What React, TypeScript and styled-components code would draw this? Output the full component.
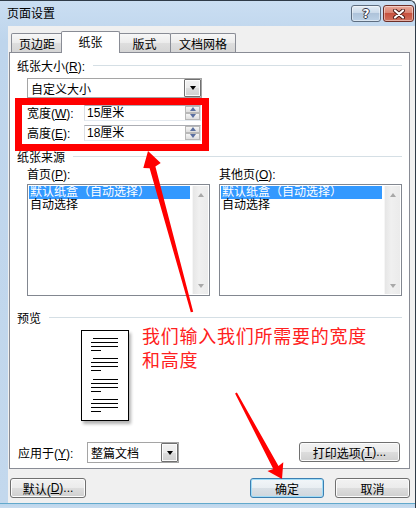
import styled, { createGlobalStyle } from "styled-components";

const GlobalStyle = createGlobalStyle`
  html, body { margin: 0; padding: 0; background: #fff; }
  body {
    font-family: "Liberation Sans", "Noto Sans CJK SC", sans-serif;
    font-size: 12px;
    color: #000;
  }
`;

const Screen = styled.div`
  position: relative;
  width: 419px;
  height: 508px;
  overflow: hidden;
`;

const Window = styled.div`
  width: 416px;
  height: 508px;
  box-sizing: border-box;
  border-top: 1px solid #2f3b48;
  border-right: 1px solid #2f3b48;
  border-top-right-radius: 6px;
  background: linear-gradient(#cadef2, #bed5ec 40px, #c3d8ed);
  display: flex;
  flex-direction: column;
`;

const TitleBar = styled.div`
  height: 25px;
  display: flex;
  align-items: flex-start;
  flex-shrink: 0;
`;

const Title = styled.div`
  padding-left: 7px;
  line-height: 26px;
  font-size: 12px;
  flex: 1;
`;

const CaptionButton = styled.div<{ $w: number; $close?: boolean }>`
  box-sizing: border-box;
  width: ${(p) => p.$w}px;
  height: 17px;
  margin-top: 4px;
  margin-left: 2px;
  border: 1px solid ${(p) => (p.$close ? "#6d2f28" : "#5d6d80")};
  border-radius: 3px;
  background: ${(p) =>
    p.$close
      ? "linear-gradient(#e9a99b, #d98472 45%, #c7513e 50%, #d0715d)"
      : "linear-gradient(#e4edf6, #cbdaea 45%, #aec3da 50%, #bcd1e6)"};
  box-shadow: inset 0 0 0 1px rgba(255, 255, 255, 0.45);
  display: flex;
  align-items: center;
  justify-content: center;
`;

const HelpGlyph = styled.span`
  font-family: "DejaVu Sans", sans-serif;
  font-weight: bold;
  font-size: 12px;
  line-height: 12px;
  color: #fff;
  text-shadow: 1px 0 0 #334, -1px 0 0 #334, 0 1px 0 #334, 0 -1px 0 #334;
`;

const Body = styled.div`
  width: 407px;
  height: 477px;
  margin-left: 8px;
  box-sizing: border-box;
  padding: 7px 0 0 1px;
  background: #f0f0f0;
  flex-shrink: 0;
`;

const BottomFrame = styled.div`
  flex: 1;
  border-top: 1px solid #62a9cc;
  background: linear-gradient(#bcd6ec, #c8dcef);
`;

const TabRow = styled.div`
  position: relative;
  z-index: 2;
  height: 19px;
  display: flex;
  align-items: flex-end;
  padding-left: 2px;
`;

const Tab = styled.div<{ $w: number; $ml: number; $active?: boolean }>`
  box-sizing: border-box;
  position: relative;
  z-index: ${(p) => (p.$active ? 2 : 1)};
  width: ${(p) => p.$w}px;
  height: ${(p) => (p.$active ? 22 : 19)}px;
  margin-left: ${(p) => p.$ml}px;
  margin-bottom: ${(p) => (p.$active ? -1 : 0)}px;
  border: 1px solid #898c95;
  border-bottom: none;
  border-radius: 2px 2px 0 0;
  background: ${(p) =>
    p.$active ? "#fff" : "linear-gradient(#f7f7f7, #ebebeb 50%, #dedede 51%, #d5d5d5)"};
  display: flex;
  align-items: center;
  justify-content: center;
  padding-bottom: ${(p) => (p.$active ? 2 : 0)}px;
`;

const Panel = styled.div`
  position: relative;
  z-index: 1;
  box-sizing: border-box;
  width: 401px;
  height: 417px;
  border: 1px solid #898c95;
  background: #fff;
  padding: 5px 7px 0 7px;
  display: flex;
  flex-direction: column;
`;

const GroupHeader = styled.div<{ $mt?: number }>`
  height: 14px;
  margin-top: ${(p) => p.$mt ?? 0}px;
  display: flex;
  align-items: center;
  gap: 8px;
  white-space: nowrap;
`;

const GroupLine = styled.div`
  flex: 1;
  height: 1px;
  background: #d5dfe5;
`;

const Combo = styled.div<{ $w: number; $h: number }>`
  box-sizing: border-box;
  width: ${(p) => p.$w}px;
  height: ${(p) => p.$h}px;
  border: 1px solid #a5a5a5;
  background: #fff;
  display: flex;
  align-items: stretch;
`;

const ComboText = styled.div`
  flex: 1;
  padding-left: 3px;
  display: flex;
  align-items: center;
`;

const DropButton = styled.div<{ $w: number }>`
  box-sizing: border-box;
  width: ${(p) => p.$w}px;
  border: 1px solid #707070;
  border-radius: 1px;
  background: linear-gradient(#f2f2f2, #ebebeb 50%, #dddddd 51%, #cfcfcf);
  box-shadow: inset 0 0 0 1px #fbfbfb;
  display: flex;
  align-items: center;
  justify-content: center;
`;

const DownTriangle = styled.div<{ $c?: string }>`
  width: 0;
  height: 0;
  border-left: 3.5px solid transparent;
  border-right: 3.5px solid transparent;
  border-top: 4px solid ${(p) => p.$c ?? "#000"};
`;

const UpTriangle = styled.div<{ $c?: string }>`
  width: 0;
  height: 0;
  border-left: 3.5px solid transparent;
  border-right: 3.5px solid transparent;
  border-bottom: 4px solid ${(p) => p.$c ?? "#000"};
`;

const Indented = styled.div<{ $mt: number; $ml?: number }>`
  margin-top: ${(p) => p.$mt}px;
  margin-left: ${(p) => p.$ml ?? 10}px;
  display: flex;
  align-items: center;
`;

const FieldLabel = styled.div<{ $w: number }>`
  width: ${(p) => p.$w}px;
  white-space: nowrap;
`;

const SpinInput = styled.div`
  box-sizing: border-box;
  width: 117px;
  height: 16px;
  border: 1px solid #abadb3;
  border-left-color: #dbdfe6;
  border-right-color: #dbdfe6;
  border-bottom-color: #e3e9ef;
  background: #fff;
  display: flex;
`;

const SpinText = styled.div`
  flex: 1;
  padding-left: 2px;
  line-height: 14px;
`;

const SpinButtons = styled.div`
  width: 15px;
  display: flex;
  flex-direction: column;
`;

const SpinHalf = styled.div`
  flex: 1;
  box-sizing: border-box;
  border: 1px solid #b8b8b8;
  background: linear-gradient(#f6f6f6, #dedede);
  display: flex;
  align-items: center;
  justify-content: center;
`;

const RedBox = styled.div`
  position: absolute;
  left: 5px;
  top: 45px;
  width: 194px;
  height: 53px;
  box-sizing: border-box;
  border: 7px solid #ff0000;
`;

const Columns = styled.div`
  margin-left: 10px;
  margin-top: 5px;
  display: flex;
  gap: 9px;
`;

const Column = styled.div<{ $w: number }>`
  width: ${(p) => p.$w}px;
  display: flex;
  flex-direction: column;
`;

const ColumnLabel = styled.div`
  height: 14px;
  line-height: 14px;
  margin-bottom: 2px;
  white-space: nowrap;
`;

const ListBox = styled.div`
  box-sizing: border-box;
  height: 112px;
  border: 1px solid #828790;
  background: #fff;
  display: flex;
  padding: 1px;
`;

const ListItems = styled.div`
  flex: 1;
  margin-right: 2px;
`;

const ListItem = styled.div<{ $selected?: boolean }>`
  height: 13px;
  line-height: 13px;
  padding-left: 1px;
  white-space: nowrap;
  background: ${(p) => (p.$selected ? "#3399ff" : "transparent")};
  color: ${(p) => (p.$selected ? "#fff" : "#000")};
`;

const ScrollBar = styled.div`
  width: 15px;
  background: linear-gradient(90deg, #e6e6e6, #f0f0f0 40%, #ebebeb);
  border-left: 1px solid #f6f6f6;
  display: flex;
  flex-direction: column;
  justify-content: space-between;
`;

const ScrollArrow = styled.div`
  height: 17px;
  display: flex;
  align-items: center;
  justify-content: center;
`;

const PreviewPage = styled.div`
  box-sizing: border-box;
  width: 48px;
  height: 91px;
  margin-top: 6px;
  margin-left: 64px;
  border: 1px solid #000;
  background: #fff;
  box-shadow: 2px 3px 3px rgba(0, 0, 0, 0.3);
`;

const Annotation = styled.div`
  position: absolute;
  left: 132px;
  top: 270px;
  font-family: "Noto Sans CJK SC", sans-serif;
  font-size: 18px;
  line-height: 24px;
  letter-spacing: 0.75px;
  color: #ff2020;
  white-space: nowrap;
`;

const ApplyRow = styled.div`
  margin-top: 21px;
  margin-left: 1px;
  display: flex;
  align-items: center;
`;

const Button = styled.div<{ $w: number; $focus?: boolean; $ml?: string; $mr?: number }>`
  box-sizing: border-box;
  width: ${(p) => p.$w}px;
  height: 20px;
  margin-left: ${(p) => p.$ml ?? "0"};
  margin-right: ${(p) => p.$mr ?? 0}px;
  border: 1px solid ${(p) => (p.$focus ? "#3c7fb1" : "#707070")};
  border-radius: 3px;
  background: ${(p) =>
    p.$focus
      ? "linear-gradient(#f2f6f9, #e9eef2 50%, #d9e0e6 51%, #cfd6dc)"
      : "linear-gradient(#f2f2f2, #ebebeb 50%, #dddddd 51%, #cfcfcf)"};
  box-shadow: inset 0 0 0 1px ${(p) => (p.$focus ? "#9fdcf7" : "#fcfcfc")};
  display: flex;
  align-items: center;
  justify-content: center;
  white-space: nowrap;
  align-self: flex-start;
`;

const ButtonRow = styled.div`
  margin-top: 9px;
  padding-left: 1px;
  display: flex;
`;

const ArrowLayer = styled.svg`
  position: absolute;
  z-index: 10;
  left: 0;
  top: 0;
  pointer-events: none;
`;

function Key({ k }: { k: string }) {
  return (
    <>
      (<u>{k}</u>):
    </>
  );
}

function Spin({ value }: { value: string }) {
  return (
    <SpinInput>
      <SpinText>{value}</SpinText>
      <SpinButtons>
        <SpinHalf>
          <UpTriangle $c="#5b70a0" />
        </SpinHalf>
        <SpinHalf>
          <DownTriangle $c="#5b70a0" />
        </SpinHalf>
      </SpinButtons>
    </SpinInput>
  );
}

function SourceList() {
  return (
    <ListBox>
      <ListItems>
        <ListItem $selected>默认纸盒（自动选择）</ListItem>
        <ListItem>自动选择</ListItem>
      </ListItems>
      <ScrollBar>
        <ScrollArrow>
          <UpTriangle $c="#a8a8a8" />
        </ScrollArrow>
        <ScrollArrow>
          <DownTriangle $c="#a8a8a8" />
        </ScrollArrow>
      </ScrollBar>
    </ListBox>
  );
}

function PageLines() {
  const groups = [7, 27, 48, 68];
  return (
    <svg width="46" height="89" viewBox="0 0 46 89">
      {groups.map((y) => (
        <g key={y} fill="#000">
          <rect x="11" y={y} width="25" height="1" />
          <rect x="9" y={y + 4} width="27" height="1" />
          <rect x="9" y={y + 8} width="27" height="1" />
          <rect x="9" y={y + 12} width="10" height="1" />
        </g>
      ))}
    </svg>
  );
}

function CloseGlyph() {
  return (
    <svg width="14" height="10" viewBox="0 0 14 10">
      <path d="M3 1.5 L11 8.5 M11 1.5 L3 8.5" stroke="#4a1a14" strokeWidth="4" strokeLinecap="round" />
      <path d="M3 1.5 L11 8.5 M11 1.5 L3 8.5" stroke="#fff" strokeWidth="2.2" strokeLinecap="round" />
    </svg>
  );
}

export default function App() {
  return (
    <Screen>
      <GlobalStyle />
      <Window>
        <TitleBar>
          <Title>页面设置</Title>
          <CaptionButton $w={30}>
            <HelpGlyph>?</HelpGlyph>
          </CaptionButton>
          <CaptionButton $w={31} $close style={{ marginRight: 1 }}>
            <CloseGlyph />
          </CaptionButton>
        </TitleBar>
        <Body>
          <TabRow>
            <Tab $w={52} $ml={0}>页边距</Tab>
            <Tab $w={59} $ml={-2} $active>纸张</Tab>
            <Tab $w={53} $ml={-2}>版式</Tab>
            <Tab $w={66} $ml={-1}>文档网格</Tab>
          </TabRow>
          <Panel>
            <GroupHeader>
              <span>
                纸张大小<Key k="R" />
              </span>
              <GroupLine />
            </GroupHeader>
            <Indented $mt={6}>
              <Combo $w={175} $h={20}>
                <ComboText>自定义大小</ComboText>
                <DropButton $w={17}>
                  <DownTriangle />
                </DropButton>
              </Combo>
            </Indented>
            <Indented $mt={6}>
              <FieldLabel $w={57}>
                宽度<Key k="W" />
              </FieldLabel>
              <Spin value="15厘米" />
            </Indented>
            <Indented $mt={3}>
              <FieldLabel $w={57}>
                高度<Key k="E" />
              </FieldLabel>
              <Spin value="18厘米" />
            </Indented>
            <GroupHeader $mt={8}>
              <span>纸张来源</span>
              <GroupLine />
            </GroupHeader>
            <Columns>
              <Column $w={183}>
                <ColumnLabel>
                  首页<Key k="P" />
                </ColumnLabel>
                <SourceList />
              </Column>
              <Column $w={183}>
                <ColumnLabel>
                  其他页<Key k="O" />
                </ColumnLabel>
                <SourceList />
              </Column>
            </Columns>
            <GroupHeader $mt={14}>
              <span>预览</span>
              <GroupLine />
            </GroupHeader>
            <PreviewPage>
              <PageLines />
            </PreviewPage>
            <ApplyRow>
              <FieldLabel $w={69}>
                应用于<Key k="Y" />
              </FieldLabel>
              <Combo $w={92} $h={21}>
                <ComboText>整篇文档</ComboText>
                <DropButton $w={17}>
                  <DownTriangle />
                </DropButton>
              </Combo>
              <Button $w={101} $ml="auto" $mr={2}>
                打印选项(<u>T</u>)...
              </Button>
            </ApplyRow>
            <RedBox />
            <Annotation>
              我们输入我们所需要的宽度
              <br />
              和高度
            </Annotation>
          </Panel>
          <ButtonRow>
            <Button $w={76}>
              默认(<u>D</u>)...
            </Button>
            <Button $w={74} $ml="auto" $focus>
              确定
            </Button>
            <Button $w={75} $ml="11px" $mr={5}>
              取消
            </Button>
          </ButtonRow>
        </Body>
        <BottomFrame />
      </Window>
      <ArrowLayer width="419" height="508" viewBox="0 0 419 508">
        <polygon
          fill="#ff0000"
          points="148,151 160.7,163.1 155.4,166.6 193.2,311.7 190.8,312.3 149.6,168.2 143.3,167.9"
        />
        <polygon
          fill="#ff0000"
          points="282,479 267.5,470.9 273.3,468.9 235.1,393.5 236.9,392.5 278.5,466.1 283.3,462.3"
        />
      </ArrowLayer>
    </Screen>
  );
}
